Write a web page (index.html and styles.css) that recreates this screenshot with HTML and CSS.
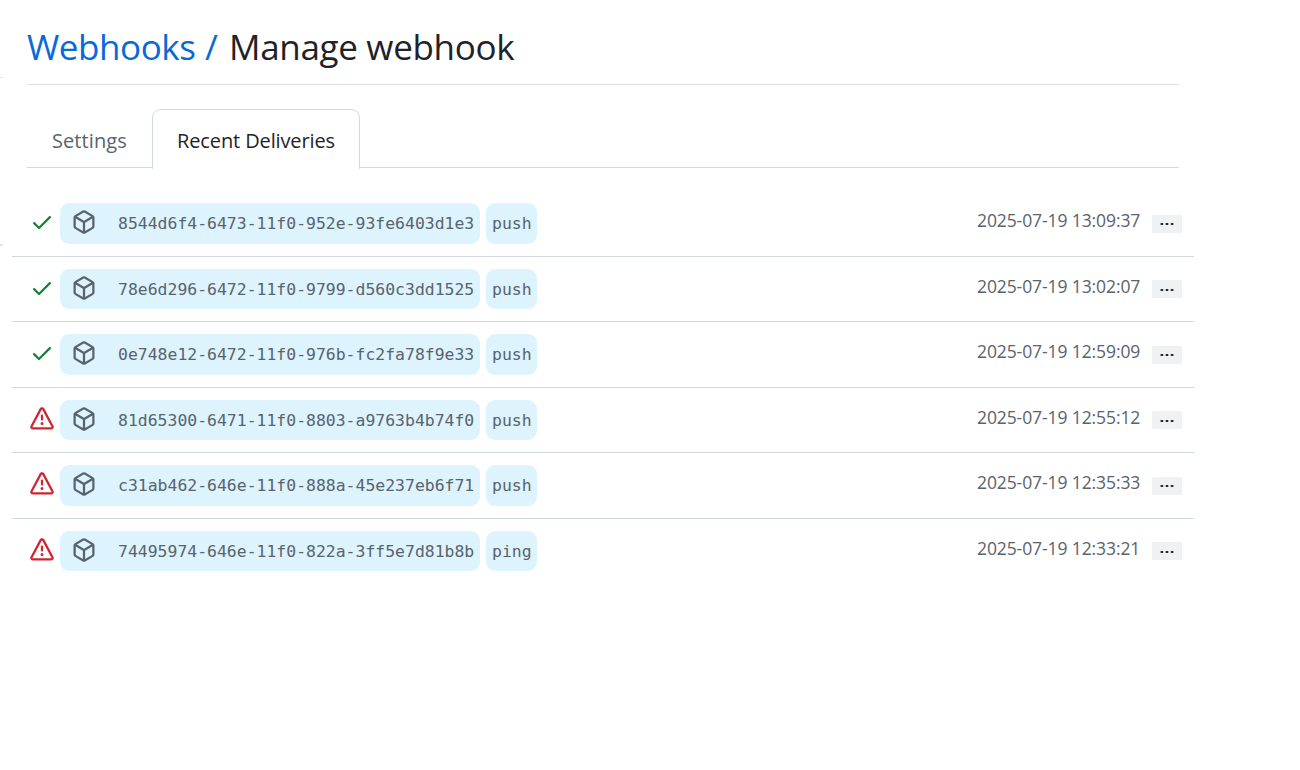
FILE: index.html
```html
<!DOCTYPE html>
<html lang="en">
<head>
<meta charset="utf-8">
<title>Manage webhook</title>
<link rel="stylesheet" href="styles.css">
</head>
<body>
<svg class="sprite" aria-hidden="true">
  <symbol id="check" viewBox="0 0 16 16"><path d="M13.78 4.22a.75.75 0 0 1 0 1.06l-7.25 7.25a.75.75 0 0 1-1.06 0L2.22 9.28a.751.751 0 0 1 .018-1.042.751.751 0 0 1 1.042-.018L6 10.94l6.72-6.72a.75.75 0 0 1 1.06 0Z"/></symbol>
  <symbol id="alert" viewBox="0 0 16 16"><path d="M6.457 1.047c.659-1.234 2.427-1.234 3.086 0l6.082 11.378A1.75 1.75 0 0 1 14.082 15H1.918a1.75 1.75 0 0 1-1.543-2.575Zm1.763.707a.25.25 0 0 0-.44 0L1.698 13.132a.25.25 0 0 0 .22.368h12.164a.25.25 0 0 0 .22-.368Zm.53 3.996v2.5a.75.75 0 0 1-1.5 0v-2.5a.75.75 0 0 1 1.5 0ZM9 11a1 1 0 1 1-2 0 1 1 0 0 1 2 0Z"/></symbol>
  <symbol id="package" viewBox="0 0 16 16"><path d="m8.878.392 5.25 3.045c.54.314.872.89.872 1.514v6.098a1.75 1.75 0 0 1-.872 1.514l-5.25 3.045a1.75 1.75 0 0 1-1.756 0l-5.25-3.045A1.75 1.75 0 0 1 1 11.049V4.951c0-.624.332-1.201.872-1.514L7.122.392a1.75 1.75 0 0 1 1.756 0ZM7.875 1.69l-4.63 2.685L8 7.133l4.755-2.758-4.63-2.685a.248.248 0 0 0-.25 0ZM2.5 5.677v5.372c0 .09.047.171.125.216l4.625 2.683V8.432Zm6.25 8.271 4.625-2.683a.25.25 0 0 0 .125-.216V5.677L8.75 8.432Z"/></symbol>
  <symbol id="dots" viewBox="0 0 14 4"><path d="M.6 1h2.6v2H.6zM5.7 1h2.6v2H5.7zM10.8 1h2.6v2h-2.6z"/></symbol>
</svg>
<span class="edge edge-top"></span>
<span class="edge edge-mid"></span>
<main class="page">
  <h1 class="title"><a class="crumb">Webhooks /</a><span class="current">Manage webhook</span></h1>
  <nav class="tabs">
    <a class="tab">Settings</a>
    <a class="tab selected">Recent Deliveries</a>
  </nav>
  <ul class="deliveries">
    <li class="delivery"><svg class="icon ok"><use href="#check"/></svg><span class="chip id"><svg class="icon"><use href="#package"/></svg><code>8544d6f4-6473-11f0-952e-93fe6403d1e3</code></span><code class="chip">push</code><time>2025-07-19 13:09:37</time><button class="more"><svg class="dots"><use href="#dots"/></svg></button></li>
    <li class="delivery"><svg class="icon ok"><use href="#check"/></svg><span class="chip id"><svg class="icon"><use href="#package"/></svg><code>78e6d296-6472-11f0-9799-d560c3dd1525</code></span><code class="chip">push</code><time>2025-07-19 13:02:07</time><button class="more"><svg class="dots"><use href="#dots"/></svg></button></li>
    <li class="delivery"><svg class="icon ok"><use href="#check"/></svg><span class="chip id"><svg class="icon"><use href="#package"/></svg><code>0e748e12-6472-11f0-976b-fc2fa78f9e33</code></span><code class="chip">push</code><time>2025-07-19 12:59:09</time><button class="more"><svg class="dots"><use href="#dots"/></svg></button></li>
    <li class="delivery"><svg class="icon bad"><use href="#alert"/></svg><span class="chip id"><svg class="icon"><use href="#package"/></svg><code>81d65300-6471-11f0-8803-a9763b4b74f0</code></span><code class="chip">push</code><time>2025-07-19 12:55:12</time><button class="more"><svg class="dots"><use href="#dots"/></svg></button></li>
    <li class="delivery"><svg class="icon bad"><use href="#alert"/></svg><span class="chip id"><svg class="icon"><use href="#package"/></svg><code>c31ab462-646e-11f0-888a-45e237eb6f71</code></span><code class="chip">push</code><time>2025-07-19 12:35:33</time><button class="more"><svg class="dots"><use href="#dots"/></svg></button></li>
    <li class="delivery"><svg class="icon bad"><use href="#alert"/></svg><span class="chip id"><svg class="icon"><use href="#package"/></svg><code>74495974-646e-11f0-822a-3ff5e7d81b8b</code></span><code class="chip">ping</code><time>2025-07-19 12:33:21</time><button class="more"><svg class="dots"><use href="#dots"/></svg></button></li>
  </ul>
</main>
</body>
</html>
```
FILE: styles.css
```css
* { box-sizing: border-box; }
body {
  margin: 0;
  background: #fff;
  color: #1f2328;
  font-family: "Open Sans", "Noto Sans", sans-serif;
}
.sprite { display: none; }
.edge { position: absolute; left: 0; width: 3px; background: #dfe2e6; }
.edge-top { top: 77px; height: 1px; }
.edge-mid { top: 244px; height: 2px; }
.page { width: 1182px; margin-left: 12px; }
.title {
  display: flex;
  align-items: center;
  gap: 11px;
  height: 85px;
  margin: 0 15px;
  padding-top: 9px;
  border-bottom: 1px solid #dfe2e5;
  font-size: 35px;
  font-weight: 400;
  letter-spacing: -0.32px;
  white-space: nowrap;
}
.crumb { width: 191px; color: #0969da; letter-spacing: -0.45px; word-spacing: 1px; }
.tabs {
  display: flex;
  height: 59px;
  margin: 24px 15px 0;
  border-bottom: 1px solid #d1d9e0;
  font-size: 20px;
}
.tab {
  height: 60px;
  padding: 17px 24px 0;
  border: 1px solid transparent;
  border-bottom: 0;
  color: #59636e;
  line-height: 28px;
  white-space: nowrap;
}
.tab:first-child { width: 125px; letter-spacing: 0.08px; }
.tab.selected {
  width: 208px;
  border-color: #d1d9e0;
  border-radius: 9px 9px 0 0;
  background: #fff;
  color: #1f2328;
  letter-spacing: -0.12px;
}
.deliveries { margin: 23px 0 0; padding: 0; list-style: none; }
.delivery {
  display: flex;
  align-items: center;
  height: 65.5px;
  padding: 0 12px 0 18px;
  border-bottom: 1px solid #d1d9e0;
}
.delivery:last-child { border-color: transparent; }
.icon { flex: none; width: 24px; height: 24px; fill: #59636e; }
.delivery > .icon { margin: 0 6px 2px 0; }
.delivery > .ok { fill: #1a7f37; }
.delivery > .bad { fill: #d1242f; }
code { font-family: "DejaVu Sans Mono", monospace; font-size: 16.44px; white-space: nowrap; }
.chip {
  display: flex;
  align-items: center;
  width: 51px;
  height: 40.5px;
  padding: 0.6px 6px 0;
  border-radius: 9px;
  background: #ddf4ff;
  color: #59636e;
}
.chip.id { width: 420px; margin-right: 6px; padding-left: 12px; }
.chip .icon { margin: 0 22px 2.8px 0; }
time {
  width: 163px;
  margin-left: auto;
  margin-right: 12px;
  padding-bottom: 6px;
  color: #59636e;
  font-size: 17.5px;
  letter-spacing: -0.1px;
  white-space: nowrap;
}
.more {
  display: flex;
  align-items: center;
  justify-content: center;
  width: 30px;
  height: 18px;
  margin-top: 1px;
  padding: 1px 0 0;
  border: 0;
  border-radius: 1.5px;
  background: #eff1f3;
}
.dots { width: 14px; height: 4px; fill: #25292e; }
```
